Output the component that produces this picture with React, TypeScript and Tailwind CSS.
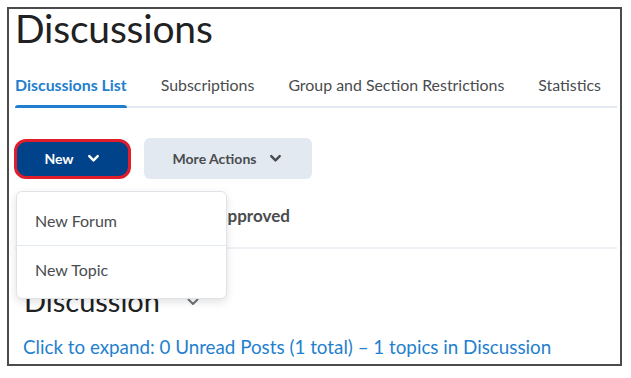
import React from "react";

function Chevron({ className = "", stroke = "currentColor", w = 2.5 }: { className?: string; stroke?: string; w?: number }) {
  return (
    <svg viewBox="0 0 16 16" className={className} fill="none">
      <path d="M3.5 5.5 L8 10 L12.5 5.5" stroke={stroke} strokeWidth={w} strokeLinecap="round" strokeLinejoin="round" />
    </svg>
  );
}

export default function App() {
  const font = { fontFamily: "Lato, 'Open Sans', Arial, sans-serif" };
  return (
    <div className="relative w-[631px] h-[378px] bg-white p-[7px]" style={font}>
      <div className="h-[359px] w-[615px] border-2 border-[#4b4b4b] bg-white">
        <div className="pl-[6px] pr-[3px]">
          <h1 className="mt-[-1px] text-[39px] leading-[40px] text-[#202122] tracking-[-0.2px]">Discussions</h1>
          <div className="mt-[27px] flex border-b-2 border-[#e3e9f1] text-[15.9px] leading-[20px]">
            <div className="flex flex-col">
              <span className="font-bold text-[#1f7fce] pb-[10px]">Discussions List</span>
              <span className="h-[3px] bg-[#1f7fce] -mb-[2px] rounded-t-sm" />
            </div>
            <span className="ml-[34px] text-[#494c4e]">Subscriptions</span>
            <span className="ml-[34px] text-[#494c4e]">Group and Section Restrictions</span>
            <span className="ml-[34px] text-[#494c4e]">Statistics</span>
          </div>
          <div className="mt-[30px] flex items-center">
            <button className="ml-[-1px] h-[40px] w-[117px] rounded-[12px] border-[3px] border-[#e01e2b] bg-[#00438a] flex items-center justify-center gap-[12px] text-white text-[14px] font-bold">
              <span>New</span>
              <Chevron className="w-[15px] h-[15px]" stroke="#ffffff" w={2.6} />
            </button>
            <button className="ml-[13px] h-[41px] w-[168px] rounded-[6px] bg-[#e3e9f1] flex items-center justify-center gap-[12px] text-[#494c4e] text-[14px] font-bold">
              <span>More Actions</span>
              <Chevron className="w-[15px] h-[15px]" stroke="#494c4e" w={2.6} />
            </button>
          </div>
          <div className="mt-[13px] h-[57px] border-b-2 border-[#eef1f5] flex items-center">
            <span className="ml-[182px] mb-[8px] text-[17px] font-bold text-[#494c4e]">Unapproved</span>
          </div>
          <div className="mt-[36px] flex items-center pl-[9px]">
            <span className="text-[29px] leading-[32px] text-[#202122]">Discussion</span>
            <Chevron className="ml-[25px] w-[16px] h-[16px] mt-[1px]" stroke="#6e7477" w={2} />
          </div>
          <div className="mt-[19px] pl-[8px] text-[18.8px] leading-[22px] text-[#1f7fce]">
            Click to expand: 0 Unread Posts (1 total) – 1 topics in Discussion
          </div>
        </div>
      </div>
      <div className="absolute left-[16px] top-[191px] w-[211px] rounded-[6px] border border-[#dfe3e8] bg-white shadow-[0_3px_8px_rgba(0,0,0,0.12)] text-[16px] text-[#494c4e]">
        <div className="h-[54px] flex items-center pl-[18px] pt-[4px] border-b border-[#e3e9f1]">New Forum</div>
        <div className="h-[52px] flex items-center pl-[18px] pb-[5px]">New Topic</div>
      </div>
    </div>
  );
}
